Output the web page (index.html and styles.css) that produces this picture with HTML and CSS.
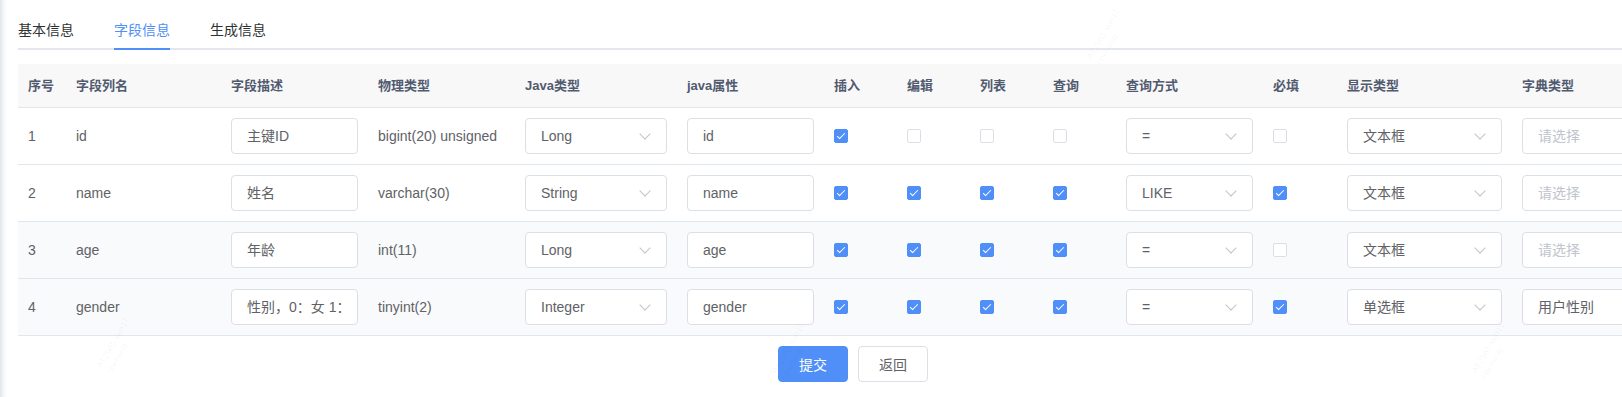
FILE: index.html
```html
<!DOCTYPE html>
<html lang="zh-CN">
<head>
<meta charset="utf-8">
<title>字段信息</title>
<link rel="stylesheet" href="styles.css">
</head>
<body>
<div class="page">
  <div class="tabs">
    <div class="tab">基本信息</div>
    <div class="tab active">字段信息</div>
    <div class="tab">生成信息</div>
  </div>

  <table class="grid">
    <colgroup>
      <col class="w48"><col class="w155"><col class="w147"><col class="w147"><col class="w162"><col class="w147">
      <col class="w73"><col class="w73"><col class="w73"><col class="w73"><col class="w147"><col class="w74"><col class="w175"><col class="w176">
    </colgroup>
    <thead>
      <tr>
        <th>序号</th><th>字段列名</th><th>字段描述</th><th>物理类型</th><th>Java类型</th><th>java属性</th>
        <th>插入</th><th>编辑</th><th>列表</th><th>查询</th><th>查询方式</th><th>必填</th><th>显示类型</th><th>字典类型</th>
      </tr>
    </thead>
    <tbody>
      <tr>
        <td>1</td><td>id</td>
        <td><div class="input">主键ID</div></td>
        <td>bigint(20) unsigned</td>
        <td><div class="input select">Long<span class="arrow"></span></div></td>
        <td><div class="input">id</div></td>
        <td><span class="cb on"></span></td><td><span class="cb"></span></td><td><span class="cb"></span></td><td><span class="cb"></span></td>
        <td><div class="input select">=<span class="arrow"></span></div></td>
        <td><span class="cb"></span></td>
        <td><div class="input select">文本框<span class="arrow"></span></div></td>
        <td><div class="input select ph">请选择<span class="arrow"></span></div></td>
      </tr>
      <tr>
        <td>2</td><td>name</td>
        <td><div class="input">姓名</div></td>
        <td>varchar(30)</td>
        <td><div class="input select">String<span class="arrow"></span></div></td>
        <td><div class="input">name</div></td>
        <td><span class="cb on"></span></td><td><span class="cb on"></span></td><td><span class="cb on"></span></td><td><span class="cb on"></span></td>
        <td><div class="input select">LIKE<span class="arrow"></span></div></td>
        <td><span class="cb on"></span></td>
        <td><div class="input select">文本框<span class="arrow"></span></div></td>
        <td><div class="input select ph">请选择<span class="arrow"></span></div></td>
      </tr>
      <tr class="shade">
        <td>3</td><td>age</td>
        <td><div class="input">年龄</div></td>
        <td>int(11)</td>
        <td><div class="input select">Long<span class="arrow"></span></div></td>
        <td><div class="input">age</div></td>
        <td><span class="cb on"></span></td><td><span class="cb on"></span></td><td><span class="cb on"></span></td><td><span class="cb on"></span></td>
        <td><div class="input select">=<span class="arrow"></span></div></td>
        <td><span class="cb"></span></td>
        <td><div class="input select">文本框<span class="arrow"></span></div></td>
        <td><div class="input select ph">请选择<span class="arrow"></span></div></td>
      </tr>
      <tr class="shade">
        <td>4</td><td>gender</td>
        <td><div class="input">性别，0：女 1：</div></td>
        <td>tinyint(2)</td>
        <td><div class="input select">Integer<span class="arrow"></span></div></td>
        <td><div class="input">gender</div></td>
        <td><span class="cb on"></span></td><td><span class="cb on"></span></td><td><span class="cb on"></span></td><td><span class="cb on"></span></td>
        <td><div class="input select">=<span class="arrow"></span></div></td>
        <td><span class="cb on"></span></td>
        <td><div class="input select">单选框<span class="arrow"></span></div></td>
        <td><div class="input select">用户性别<span class="arrow"></span></div></td>
      </tr>
    </tbody>
  </table>

  <div class="actions">
    <button class="btn primary">提交</button>
    <button class="btn">返回</button>
  </div>

  <div class="wm wm1">AT2565-win11<br>chenjing</div>
  <div class="wm wm2">AT2565-win11<br>chenjing</div>
  <div class="wm wm3">AT2565-win11<br>chenjing</div>
  <div class="wm wm4">AT2565-win11<br>chenjing</div>
</div>
</body>
</html>
```

FILE: styles.css
```css
html, body {
  margin: 0;
  padding: 0;
  overflow: hidden;
}
body {
  width: 1622px;
  height: 397px;
  background: linear-gradient(to right, #e2e4e9 0, #f3f4f6 3px, #ffffff 7px);
  font-family: "Liberation Sans", "Noto Sans CJK SC", Arial, sans-serif;
  color: #606266;
  font-size: 14px;
}
.page {
  position: relative;
  width: 1670px;
  padding: 10px 0 0 18px;
}
.tabs {
  display: flex;
  height: 38px;
  border-bottom: 2px solid #e4e7ed;
  margin-bottom: 14px;
}
.tab {
  position: relative;
  padding: 0 20px;
  line-height: 40px;
  font-size: 14px;
  color: #303133;
}
.tab:first-child { padding-left: 0; }
.tab.active { color: #4f8ff7; }
.tab.active::after {
  content: "";
  position: absolute;
  left: 20px;
  right: 20px;
  bottom: -2px;
  height: 2px;
  background: #4f8ff7;
}
.grid {
  border-collapse: collapse;
  table-layout: fixed;
  width: 1670px;
}
.w48 { width: 48px; }
.w155 { width: 155px; }
.w147 { width: 147px; }
.w162 { width: 162px; }
.w73 { width: 73px; }
.w74 { width: 74px; }
.w175 { width: 175px; }
.w176 { width: 176px; }
.grid th {
  background: #f8f8f9;
  color: #515a6e;
  font-size: 13px;
  font-weight: bold;
  text-align: left;
  padding: 10px 10px;
  line-height: 23px;
  border-bottom: 1px solid #dfe6ec;
  white-space: nowrap;
}
.grid td {
  padding: 10px 10px;
  height: 36px;
  border-bottom: 1px solid #dfe6ec;
  white-space: nowrap;
  color: #606266;
  vertical-align: middle;
  overflow: hidden;
}
.grid tr.shade td { background: #f9fafc; }
.input {
  position: relative;
  box-sizing: border-box;
  height: 36px;
  line-height: 34px;
  border: 1px solid #dcdfe6;
  border-radius: 4px;
  background: #fff;
  padding: 0 15px;
  color: #606266;
  overflow: hidden;
  white-space: nowrap;
}
.select { padding-right: 30px; }
.ph { color: #c0c4cc; }
.arrow {
  position: absolute;
  right: 17px;
  top: 11px;
  width: 7px;
  height: 7px;
  border-right: 1px solid #c0c4cc;
  border-bottom: 1px solid #c0c4cc;
  transform: rotate(45deg);
}
.cb {
  display: block;
  box-sizing: border-box;
  width: 14px;
  height: 14px;
  border: 1px solid #dcdfe6;
  border-radius: 2px;
  background: #fff;
  position: relative;
}
.cb.on {
  background: #4f8ff7;
  border-color: #4f8ff7;
}
.cb.on::after {
  content: "";
  position: absolute;
  left: 4px;
  top: 1px;
  width: 3px;
  height: 7px;
  border-right: 1px solid #fff;
  border-bottom: 1px solid #fff;
  transform: rotate(45deg);
}
.actions {
  display: flex;
  justify-content: center;
  gap: 10px;
  margin-top: 10px;
}
.btn {
  width: 70px;
  height: 36px;
  box-sizing: border-box;
  border: 1px solid #dcdfe6;
  border-radius: 4px;
  background: #fff;
  color: #606266;
  font-family: "Liberation Sans", "Noto Sans CJK SC", Arial, sans-serif;
  font-size: 14px;
  padding: 0;
}
.btn.primary {
  background: #4f8ff7;
  border-color: #4f8ff7;
  color: #fff;
}
.wm {
  position: absolute;
  font-size: 9px;
  line-height: 11px;
  color: rgba(0, 0, 0, 0.05);
  transform: rotate(-60deg);
  pointer-events: none;
  white-space: nowrap;
}
.wm1 { left: 1080px; top: 26px; }
.wm2 { left: 90px; top: 335px; }
.wm3 { left: 765px; top: 340px; }
.wm4 { left: 1465px; top: 340px; }
```
